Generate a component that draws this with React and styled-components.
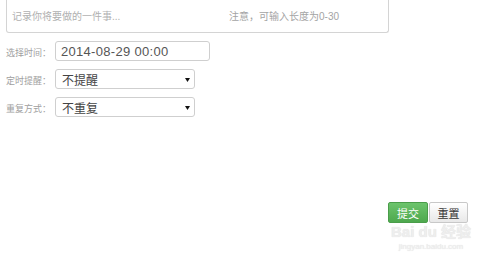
import React from 'react';
import styled, { createGlobalStyle } from 'styled-components';

const GlobalStyle = createGlobalStyle`
  html, body {
    margin: 0;
    padding: 0;
    background: #fff;
  }
  body {
    font-family: "Liberation Sans", Arial, "Noto Sans CJK SC", sans-serif;
    width: 500px;
    height: 264px;
    overflow: hidden;
  }
`;

const Page = styled.div`
  position: relative;
  width: 500px;
  height: 264px;
  padding-left: 6px;
  box-sizing: border-box;
`;

const NoteBox = styled.div`
  width: 383px;
  height: 33px;
  box-sizing: border-box;
  border: 1px solid #d4d4d4;
  border-top: none;
  border-radius: 0 0 3px 3px;
  display: flex;
  align-items: center;
  padding: 0 0 2px 5px;
  font-size: 10px;
  color: #b0b0b0;
`;

const Placeholder = styled.span`
  width: 217px;
`;

const Hint = styled.span`
  color: #a4a4a4;
`;

const Form = styled.div`
  display: flex;
  flex-direction: column;
  gap: 8px;
  margin-top: 8px;
`;

const Row = styled.div`
  display: flex;
  align-items: center;
  height: 20px;
`;

const Label = styled.span`
  width: 49px;
  font-size: 9px;
  color: #a0a0a0;
  padding-top: 2px;
`;

const TextInput = styled.div`
  width: 155px;
  height: 20px;
  box-sizing: border-box;
  border: 1px solid #cfcfcf;
  border-radius: 3px;
  display: flex;
  align-items: center;
  padding-left: 5px;
  font-size: 13px;
  letter-spacing: 0.3px;
  color: #555;
`;

const Select = styled.div`
  width: 140px;
  height: 20px;
  box-sizing: border-box;
  border: 1px solid #cfcfcf;
  border-radius: 3px;
  display: flex;
  align-items: center;
  justify-content: space-between;
  padding: 0 4px 0 6px;
  font-size: 12px;
  color: #444;
`;

const Arrow = styled.svg`
  width: 5px;
  height: 4px;
  margin-top: 1px;
`;

const Actions = styled.div`
  display: flex;
  justify-content: flex-end;
  gap: 1px;
  margin-top: 85px;
  padding-right: 32px;
`;

const Button = styled.button`
  height: 21px;
  width: ${({ $w }) => $w}px;
  box-sizing: border-box;
  padding: 0;
  font-family: "Liberation Sans", "Noto Sans CJK SC", sans-serif;
  font-size: 11px;
  border-radius: 2px;
  border: 1px solid ${({ $primary }) => ($primary ? '#4a9d4a' : '#c8c8c8')};
  color: ${({ $primary }) => ($primary ? '#fff' : '#333')};
  background: ${({ $primary }) =>
    $primary
      ? 'linear-gradient(#6cc46c, #4ea84e)'
      : 'linear-gradient(#ffffff, #e8e8e8)'};
`;

const Watermark = styled.div`
  position: absolute;
  left: 386px;
  top: 224px;
  width: 90px;
  display: flex;
  flex-direction: column;
  align-items: center;
  color: #eeeeee;
  text-shadow: 0 0 1px #dadada;
  white-space: nowrap;
  pointer-events: none;
`;

const MarkLogo = styled.span`
  font-size: 15px;
  font-weight: bold;
  line-height: 16px;
`;

const MarkUrl = styled.span`
  font-size: 8px;
  line-height: 10px;
  margin-top: 2px;
`;

function DownArrow() {
  return (
    <Arrow viewBox="0 0 5 4">
      <polygon points="0,0 5,0 2.5,4" fill="#111" />
    </Arrow>
  );
}

export default function App() {
  return (
    <>
      <GlobalStyle />
      <Page>
        <NoteBox>
          <Placeholder>记录你将要做的一件事...</Placeholder>
          <Hint>注意，可输入长度为0-30</Hint>
        </NoteBox>

        <Form>
          <Row>
            <Label>选择时间：</Label>
            <TextInput>2014-08-29 00:00</TextInput>
          </Row>
          <Row>
            <Label>定时提醒：</Label>
            <Select>
              <span>不提醒</span>
              <DownArrow />
            </Select>
          </Row>
          <Row>
            <Label>重复方式：</Label>
            <Select>
              <span>不重复</span>
              <DownArrow />
            </Select>
          </Row>
        </Form>

        <Actions>
          <Button $primary $w={40}>提交</Button>
          <Button $w={39}>重置</Button>
        </Actions>

        <Watermark>
          <MarkLogo>Bai du 经验</MarkLogo>
          <MarkUrl>jingyan.baidu.com</MarkUrl>
        </Watermark>
      </Page>
    </>
  );
}
